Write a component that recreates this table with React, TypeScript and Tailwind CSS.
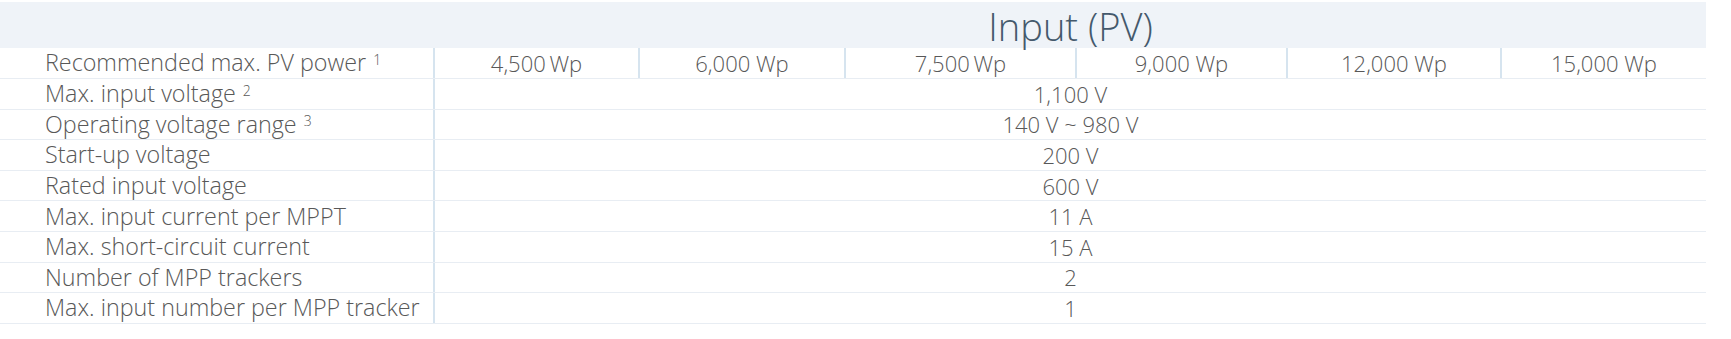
const valueCols = [
  { w: "w-[205px]", v: "4,500\u2009Wp" },
  { w: "w-[206px]", v: "6,000 Wp" },
  { w: "w-[231px]", v: "7,500\u2009Wp" },
  { w: "w-[211px]", v: "9,000 Wp" },
  { w: "w-[214px]", v: "12,000 Wp" },
  { w: "w-[204px]", v: "15,000 Wp" },
];

const rows: { label: string; sup?: string; value: string }[] = [
  { label: "Max. input voltage", sup: "2", value: "1,100 V" },
  { label: "Operating voltage range", sup: "3", value: "140 V ~ 980 V" },
  { label: "Start-up voltage", value: "200 V" },
  { label: "Rated input voltage", value: "600 V" },
  { label: "Max. input current per MPPT", value: "11 A" },
  { label: "Max. short-circuit current", value: "15 A" },
  { label: "Number of MPP trackers", value: "2" },
  { label: "Max. input number per MPP tracker", value: "1" },
];

function Label({ text, sup }: { text: string; sup?: string }) {
  return (
    <div className="flex h-full w-[435px] shrink-0 items-center border-r-2 border-[#d6e4ef] pl-[45px] text-[23.3px]">
      <span>{text}</span>
      {sup && <span className="ml-[7px] -mt-[6px] text-[14px]">{sup}</span>}
    </div>
  );
}

export default function App() {
  return (
    <div className="h-[339px] w-[1731px] bg-white pt-[2px] font-['Open_Sans',sans-serif] text-[22px] font-light leading-none text-[#585858]">
      <div className="w-[1706px]">
        {/* Section header */}
        <div className="flex h-[46px] bg-[#eff3f8]">
          <div className="w-[435px] shrink-0" />
          <div className="flex flex-1 items-center justify-center pt-[1px] text-[38px] text-[#44596c]">
            Input (PV)
          </div>
        </div>

        {/* First row: per-model values */}
        <div className="flex h-[31px] border-b border-[#e8edf3]">
          <Label text="Recommended max. PV power" sup="1" />
          {valueCols.map((c, i) => (
            <div
              key={c.v}
              className={`flex h-full ${c.w} shrink-0 items-center justify-center ${i < valueCols.length - 1 ? "border-r-2 border-[#d6e4ef]" : ""}`}
            >
              {c.v}
            </div>
          ))}
        </div>

        {rows.map((r) => (
          <div key={r.label} className="flex h-[30.6px] border-b border-[#e8edf3]">
            <Label text={r.label} sup={r.sup} />
            <div className="flex flex-1 items-center justify-center">{r.value}</div>
          </div>
        ))}
      </div>
    </div>
  );
}
